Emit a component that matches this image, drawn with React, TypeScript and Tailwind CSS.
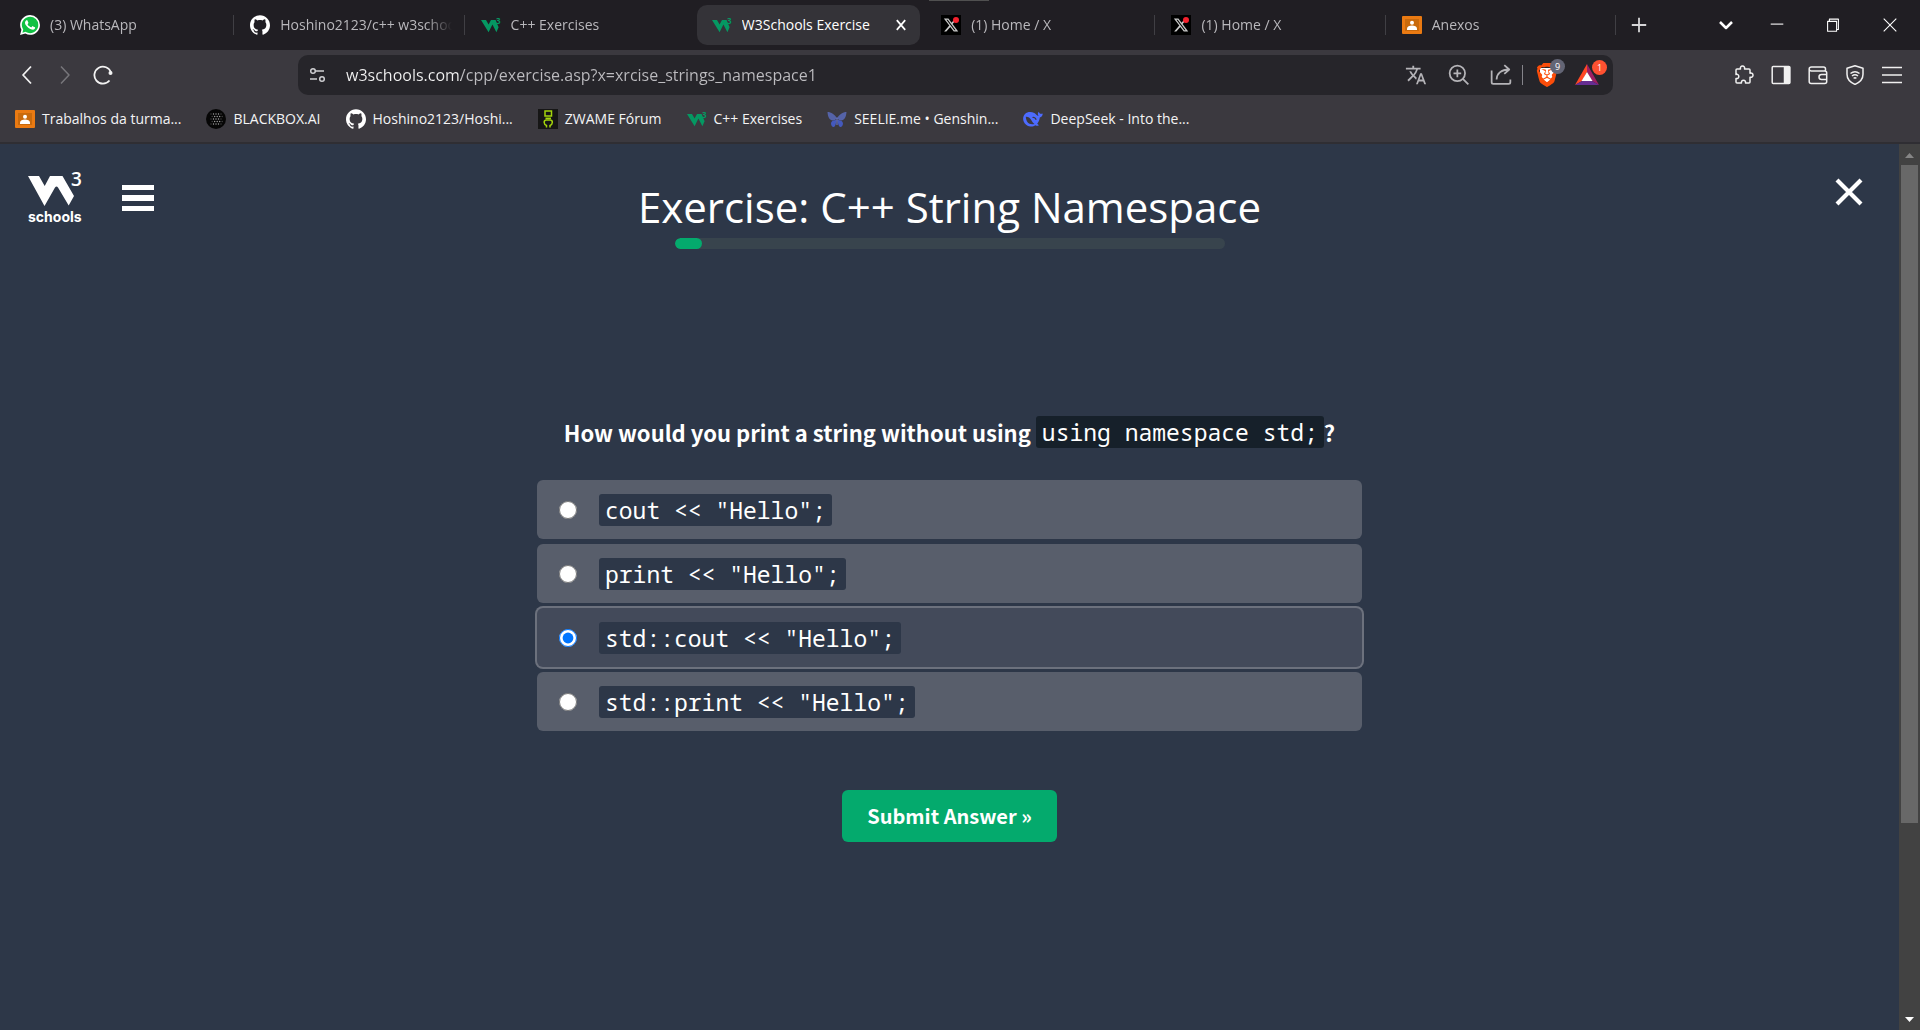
import { useState, type ReactNode } from "react";
import { SiBrave, SiGithub, SiWhatsapp } from "react-icons/si";
import { FaXTwitter } from "react-icons/fa6";
import { MdTranslate } from "react-icons/md";

function W3Mini() {
  return (
    <svg viewBox="0 0 20 20" className="size-5 shrink-0" aria-hidden="true">
      <path d="M0 5h5l2.6 4.6L10 5h4.600l3 7.200-2.200 5-4-7.600-3.800 7.600z" fill="#059862" />
      <text x="15" y="9" fontSize="8" fontWeight="700" fill="#059862" fontFamily="Open Sans">3</text>
    </svg>
  );
}

function WhatsappIcon() {
  return (
    <svg viewBox="0 0 24 24" className="size-5 shrink-0" aria-hidden="true">
      <circle cx="12" cy="12" r="11" fill="#10c143" />
      <path d="M1.500 22.500l1.200-6 4.500 4.600z" fill="#10c143" />
      <SiWhatsapp size={24} color="#fff" />
    </svg>
  );
}

function XIcon() {
  return (
    <span className="relative grid size-5 shrink-0 place-items-center bg-black">
      <FaXTwitter size={16} color="#c9c9c9" />
      <span className="absolute right-0.5 top-0.5 size-1.5 rounded-full bg-[#f4212e]" />
    </span>
  );
}

function ClassroomIcon() {
  return (
    <svg viewBox="0 0 20 18" className="h-[18px] w-5 shrink-0" aria-hidden="true">
      <rect width="20" height="18" rx="1" fill="#ea7a12" />
      <rect x="3" y="3" width="14" height="12" fill="#c96a0c" />
      <circle cx="10" cy="6.800" r="2" fill="#fff" />
      <path d="M5 14v-1.500c0-2 2.500-3 5-3s5 1 5 3V14z" fill="#fff" />
    </svg>
  );
}

function BlackboxIcon() {
  const rows = [5, 7.5, 10, 12.5, 15];
  return (
    <svg viewBox="0 0 20 20" className="size-5 shrink-0" aria-hidden="true">
      <circle cx="10" cy="10" r="10" fill="#060606" />
      {rows.map((y, i) =>
        [-2, -1, 0, 1, 2].map((k) => (
          <circle key={`${y}${k}`} cx={10 + k * 2.5 + (i % 2 ? 1.2 : 0)} cy={y} r="0.7" fill="#a5a5a5" opacity={Math.abs(k) === 2 ? 0.4 : 1} />
        )),
      )}
    </svg>
  );
}

function ZwameIcon() {
  return (
    <svg viewBox="0 0 20 20" className="size-5 shrink-0" aria-hidden="true">
      <rect width="20" height="20" fill="#161616" />
      <g fill="none" stroke="#a4d50c" strokeWidth="1.500">
        <rect x="7" y="2" width="6.500" height="5" />
        <path d="M7.500 9.300h5.500" />
        <path d="M8.500 18.500v-2C5.500 15.500 5.500 11.500 8 11h4.500c2.500.5 2.500 4.500-.5 5.500v2" />
      </g>
    </svg>
  );
}

function ButterflyIcon() {
  return (
    <svg viewBox="0 0 20 20" className="size-5 shrink-0" aria-hidden="true">
      <path d="M10 9.500C8 5.500 4 3 .5 3c.3 3 .8 6.500 3.500 8 1.500.8 4 .5 6-1.500zM10 9.500c2-4 6-6.500 9.500-6.500-.3 3-.8 6.500-3.500 8-1.500.8-4 .5-6-1.500z" fill="#5563a8" />
      <path d="M9.500 11c-2.500 0-5.500 1-5.500 3.500 0 2 1.500 4 3 3.500C8.500 17.300 9.200 14 9.500 11zM10.500 11c2.500 0 5.500 1 5.500 3.500 0 2-1.500 4-3 3.500-1.500-.7-2.200-4-2.500-7z" fill="#4459bd" />
      <path d="M9.500 8.500h1V16h-1z" fill="#6e7fd6" />
    </svg>
  );
}

function DeepSeekIcon() {
  return (
    <svg viewBox="0 0 20 20" className="size-5 shrink-0" aria-hidden="true">
      <path
        d="M19.800 4.500c-.8.500-1.700.3-2.600.2-.7-.4-1-1.200-1.400-2-.9.700-1.200 1.900-.8 3 .2.600.5 1 .3 1.400-1.300-.5-2.500-1.900-4-3C8.500 2.600 4.500 2.500 2 5 .1 7-.3 9.700.6 12.200c1 2.800 3.500 5 6.600 5.300 1.900.2 3.700-.1 5.200-1.200.8.500 1.800.6 2.800.5.700-.2.300-.9-.1-1.200l-.9-.9c1.900-1.900 2.300-4.200 2.600-6.100 1.700-.5 2.800-2 3-4.100z"
        fill="#4d6bfe"
      />
      <path d="M2.800 7.800c2.800-.2 4.500 1.600 5.700 3.600.9 1.500 1.600 2.700 3 3.600-2.800.6-5.600.2-7.300-2.200C3.300 11.300 2.900 9.500 2.800 7.800z" fill="#3b393f" />
      <path d="M9.500 8.500c1.300-.5 3.200.4 3.600 2.300" fill="none" stroke="#3b393f" strokeWidth="1.200" />
    </svg>
  );
}

function Line({ d, size = 20, width = 1.5, color = "#d6d6d8", children }: { d?: string; size?: number; width?: number; color?: string; children?: ReactNode }) {
  return (
    <svg width={size} height={size} viewBox="0 0 20 20" fill="none" stroke={color} strokeWidth={width} strokeLinejoin="round" className="shrink-0" aria-hidden="true">
      {d && <path d={d} />}
      {children}
    </svg>
  );
}

const tabs = [
  { title: "(3) WhatsApp", icon: <WhatsappIcon /> },
  { title: "Hoshino2123/c++ w3schools", icon: <SiGithub size={20} color="#fff" className="shrink-0" /> },
  { title: "C++ Exercises", icon: <W3Mini /> },
  { title: "W3Schools Exercise", icon: <W3Mini />, active: true },
  { title: "(1) Home / X", icon: <XIcon /> },
  { title: "(1) Home / X", icon: <XIcon /> },
  { title: "Anexos", icon: <ClassroomIcon /> },
];

const bookmarks = [
  { title: "Trabalhos da turma...", icon: <ClassroomIcon /> },
  { title: "BLACKBOX.AI", icon: <BlackboxIcon /> },
  { title: "Hoshino2123/Hoshi...", icon: <SiGithub size={20} color="#fff" className="shrink-0" /> },
  { title: "ZWAME Fórum", icon: <ZwameIcon /> },
  { title: "C++ Exercises", icon: <W3Mini /> },
  { title: "SEELIE.me • Genshin...", icon: <ButterflyIcon /> },
  { title: "DeepSeek - Into the...", icon: <DeepSeekIcon /> },
];

const answers = ['cout << "Hello";', 'print << "Hello";', 'std::cout << "Hello";', 'std::print << "Hello";'];

function TabStrip() {
  return (
    <div className="relative flex h-[50px] items-center bg-[#201e23] pl-1">
      <div className="absolute left-[929px] top-0 h-px w-[60px] bg-[#505050]" />
      <div className="grid h-full min-w-0 flex-1 grid-cols-7">
        {tabs.map((t, i) => (
          <div key={i} className="flex h-full min-w-0 items-center">
            <div className={t.active ? "ml-0.5 mr-1 flex h-10 min-w-0 flex-1 items-center rounded-[10px] bg-[#343338] pl-[15px] pr-2" : "flex h-10 min-w-0 flex-1 items-center pl-4 pr-3"}>
              <button type="button" className="flex min-w-0 flex-1 items-center gap-2.5 text-left">
                {t.icon}
                <span
                  className={
                    t.active
                      ? "flex-1 overflow-hidden whitespace-nowrap text-white"
                      : "flex-1 overflow-hidden whitespace-nowrap text-[#b9b8bc] [mask-image:linear-gradient(90deg,#000_85%,transparent)]"
                  }
                >
                  {t.title}
                </span>
              </button>
              {t.active && (
                <button type="button" aria-label="Close tab" className="p-1">
                  <Line size={14} width={2.500} color="#fff" d="M4 3l12 14M16 3L4 17" />
                </button>
              )}
            </div>
            <div className={i === 2 || i === 3 ? "w-px" : "h-5 w-px bg-[#403f44]"} />
          </div>
        ))}
      </div>
      <div className="flex w-[304px] shrink-0 items-center pl-[11px]">
        <button type="button" aria-label="New tab" className="grid size-6 place-items-center"><Line size={18} width={2} d="M10 2v16M2 10h16" /></button>
        <button type="button" aria-label="Search tabs" className="ml-[63px] grid size-6 place-items-center"><Line size={20} width={2.500} color="#fff" d="M4 7l6 6 6-6" /></button>
        <button type="button" aria-label="Minimize" className="ml-[27px] grid size-6 place-items-center"><Line size={18} width={1.200} color="#fff" d="M3 9h14" /></button>
        <button type="button" aria-label="Restore" className="ml-8 grid size-6 place-items-center"><Line size={18} width={1.200} color="#fff" d="M4 6h10v11H4zM6 6V3.500h10V15h-2" /></button>
        <button type="button" aria-label="Close" className="ml-[33px] grid size-6 place-items-center"><Line size={18} width={1.200} color="#fff" d="M3 3l14 14M17 3L3 17" /></button>
      </div>
    </div>
  );
}

function Toolbar() {
  return (
    <div className="flex h-12 items-start justify-between pt-[5px]">
      <div className="flex h-10 w-[298px] shrink-0 items-center gap-[18px] pl-[17px]">
        <button type="button" aria-label="Back"><Line width={1.800} color="#f2f2f2" d="M14 1.500L6 10l8 8.500" /></button>
        <button type="button" aria-label="Forward"><Line width={1.500} color="#77767b" d="M6 1.500l8 8.500-8 8.500" /></button>
        <button type="button" aria-label="Reload">
          <Line width={1.800} color="#f2f2f2" d="M16.500 15.500A8.500 8.500 0 1 1 18 7.500"><circle cx="17.500" cy="8" r="2" fill="#f2f2f2" stroke="none" /></Line>
        </button>
      </div>
      <div className="flex h-10 min-w-0 flex-1 items-center rounded-[10px] bg-[#26252a] pl-2.5">
        <button type="button" aria-label="Site information">
          <Line color="#cfcfd2"><circle cx="5" cy="6" r="2.300" /><path d="M8 6h8M2 14h7" /><circle cx="14" cy="14" r="2.300" /></Line>
        </button>
        <input
          type="text"
          aria-label="Address"
          defaultValue="w3schools.com/cpp/exercise.asp?x=xrcise_strings_namespace1"
          className="ml-[18px] h-8 min-w-0 flex-1 bg-[linear-gradient(90deg,#f2f2f2_115px,#bdbcc0_115px)] bg-clip-text text-base text-transparent outline-none"
        />
        <div className="flex h-10 items-center">
          <button type="button" aria-label="Translate"><MdTranslate size={22} color="#b5b4b8" /></button>
          <button type="button" aria-label="Zoom" className="ml-[21px]"><Line size={22} width={1.600} color="#b5b4b8" d="M13.500 13.500l5 5M8.500 5v7M5 8.500h7"><circle cx="8.500" cy="8.500" r="7" /></Line></button>
          <button type="button" aria-label="Share" className="ml-5"><Line size={22} width={1.600} color="#b5b4b8" d="M1.500 6v10.500c0 1 .5 1.500 1.500 1.500h14c1 0 1.500-.5 1.500-1.500V14M6 14c0-5 4-9 11.500-9M13 1l4.500 4-4.500 4" /></button>
          <span className="ml-2.5 h-5 w-px bg-[#85848a]" />
          <button type="button" aria-label="Brave Shields" className="relative ml-3">
            <svg width="24" height="24" viewBox="0 0 24 24" aria-hidden="true"><path d="M5 5h14v9l-7 7-7-7z" fill="#fff" /><SiBrave size={24} color="#fb4d0a" /></svg>
            <span className="absolute -right-1.5 -top-1 grid size-[15px] place-items-center rounded-full bg-[#636575] text-[9px] leading-none text-white">9</span>
          </button>
          <button type="button" aria-label="Brave Rewards" className="relative ml-4 mr-3.5">
            <svg width="24" height="22" viewBox="0 0 24 22" aria-hidden="true">
              <path d="M12 0L0 21l7-4 5-9z" fill="#ff4724" />
              <path d="M12 0l12 21-7-4-5-9z" fill="#9e1f63" />
              <path d="M0 21h24l-7-4H7z" fill="#662d91" />
              <path d="M12 8l5.500 9h-11z" fill="#fff" />
            </svg>
            <span className="absolute -right-2 -top-1 grid size-[15px] place-items-center rounded-full bg-[#ff5131] text-[9px] leading-none text-white">1</span>
          </button>
        </div>
      </div>
      <div className="flex h-10 w-[307px] shrink-0 items-center justify-end gap-[17px] pr-[18px]">
        <button type="button" aria-label="Extensions"><Line d="M3 4h3.500c-.6-1.800.5-3 2-3s2.600 1.200 2 3H15c.7 0 1 .3 1 1v3.200c1.800-.5 3 .5 3 2s-1.200 2.500-3 2V17c0 .7-.3 1-1 1h-3.500c.4-1.800-.6-2.800-2-2.800s-2.400 1-2 2.800H3c-.7 0-1-.3-1-1v-3.500c1.800.4 2.800-.6 2.800-2S3.800 9 2 9.500V5c0-.7.300-1 1-1z" color="#f0f0f0" /></button>
        <button type="button" aria-label="Sidebar"><Line color="#f0f0f0"><rect x="1.200" y="1.500" width="17.600" height="17" rx="1" /><path d="M13.500 2h5v16h-5z" fill="#f0f0f0" /></Line></button>
        <button type="button" aria-label="Wallet"><Line color="#f0f0f0" d="M17.500 6V4c0-1.200-.6-2-2-2H3.500C2 2 1.200 2.800 1.200 4v12.500c0 1.200.8 2 2 2h13.500c1.200 0 2-.8 2-2V8c0-1.200-.8-2-2-2H3.500C2 6 1.200 5.200 1.200 4M18.500 9.500h-5c-1.700 0-2.500 1-2.500 2.500s.8 2.500 2.500 2.500h5" /></button>
        <button type="button" aria-label="VPN"><Line size={20} color="#f0f0f0" d="M10 .8l8 2.500v6c0 4.700-2.700 7.900-8 10.100-5.300-2.200-8-5.400-8-10.100v-6zM5.500 8.500c2.800-2.300 6.200-2.300 9 0M7 11c1.800-1.500 4.200-1.500 6 0M8.600 13.300c.9-.6 1.900-.6 2.800 0" /></button>
        <button type="button" aria-label="Menu"><Line width={1.600} color="#f0f0f0" d="M0 2.500h20M0 10h20M0 17.500h20" /></button>
      </div>
    </div>
  );
}

function Bookmarks() {
  return (
    <nav aria-label="Bookmarks" className="flex h-[46px] items-center gap-[25px] border-b-2 border-[#2f2e33] pb-0.5 pl-[15px]">
      {bookmarks.map((b) => (
        <a key={b.title} href="#" className="flex items-center gap-[7px] whitespace-nowrap text-[#f4f4f5]">
          {b.icon}
          <span>{b.title}</span>
        </a>
      ))}
    </nav>
  );
}

function PageHeader() {
  return (
    <header className="flex items-start px-7 pt-6">
      <div className="flex w-60 items-start gap-9">
        <a href="#" aria-label="W3Schools" className="block">
          <svg width="58" height="60" viewBox="0 0 58 60" fill="#fff" aria-hidden="true">
            <path d="M0 8h11l5.700 10L22 8h12.500L46 28l-5.300 9.500L30 19.500q-1.500-2-3 0L16.500 38z" />
            <text x="43" y="18" fontSize="19" fontWeight="600" fontFamily="Open Sans">3</text>
            <text x="0" y="54" fontSize="14" fontWeight="700" fontFamily="Inter">schools</text>
          </svg>
        </a>
        <button type="button" aria-label="Open menu" className="mt-[17px] flex flex-col gap-[5px]">
          <span className="h-[5px] w-8 bg-white" />
          <span className="h-[6px] w-8 bg-white" />
          <span className="h-[5px] w-8 bg-white" />
        </button>
      </div>
      <div className="flex flex-1 flex-col items-center">
        <h1 className="mt-2 text-[42px] leading-[62px]">Exercise: C++ String Namespace</h1>
        <div role="progressbar" aria-label="Progress" aria-valuenow={5} aria-valuemin={0} aria-valuemax={100} className="h-[11px] w-full max-w-[550px] overflow-hidden rounded-full bg-[#38444d]">
          <div className="h-full w-[5%] rounded-full bg-[#04aa6d]" />
        </div>
      </div>
      <div className="flex w-60 justify-end pr-[7px]">
        <button type="button" aria-label="Close exercise" className="mt-[9px]">
          <Line size={30} width={2.800} color="#fff" d="M2 2l16 16M18 2L2 18" />
        </button>
      </div>
    </header>
  );
}

function Quiz() {
  const [selected, setSelected] = useState(2);
  return (
    <form className="mx-auto mt-[167px] flex w-full max-w-[825px] flex-col items-center" onSubmit={(e) => e.preventDefault()}>
      <p id="question" className="flex items-center font-['Noto_Sans_CJK_SC',sans-serif] text-[22px] font-semibold leading-8">
        <span>How would you print a string without using</span>
        <code className="ml-[5px] rounded-[3px] bg-[#16202a] px-[6px] font-['Noto_Sans_Mono','DejaVu_Sans_Mono',monospace] text-[23px] font-normal leading-8">using namespace std;</code>
        <span>?</span>
      </p>
      <div role="radiogroup" aria-labelledby="question" className="mt-8 flex w-full flex-col gap-[5px]">
        {answers.map((a, i) => (
          <label
            key={a}
            className={
              i === selected
                ? "flex h-[59px] items-center gap-[22px] rounded-md bg-[#434a5a] pl-[22px] ring-2 ring-[#6c717d]"
                : "flex h-[59px] items-center gap-[22px] rounded-md bg-[#585e6b] pl-[22px]"
            }
          >
            <input type="radio" name="answer" checked={i === selected} onChange={() => setSelected(i)} className="size-[18px] accent-[#0075ff]" />
            <code className="rounded-[3px] bg-[#2d3748] px-[6px] font-['Noto_Sans_Mono','DejaVu_Sans_Mono',monospace] text-[23px] leading-8">{a}</code>
          </label>
        ))}
      </div>
      <button type="submit" className="mt-[59px] h-[52px] rounded-md bg-[#04aa6d] px-[25px] font-['Noto_Sans_CJK_SC',sans-serif] text-xl font-semibold">
        Submit Answer »
      </button>
    </form>
  );
}

function Scrollbar() {
  return (
    <div aria-hidden="true" className="flex w-[21px] shrink-0 flex-col bg-[#424242]">
      <svg viewBox="0 0 21 21" className="h-[21px]"><path d="M6 14l4.500-5 4.500 5z" fill="#868686" /></svg>
      <div className="flex-1 px-0.5"><div className="h-[78%] bg-[#686868]" /></div>
      <svg viewBox="0 0 21 21" className="h-[21px]"><path d="M6 8l4.500 5L15 8z" fill="#fff" /></svg>
    </div>
  );
}

export default function App() {
  return (
    <div className="flex h-screen flex-col overflow-hidden bg-[#3b393f] font-['Open_Sans','Noto_Sans',sans-serif] text-sm text-white">
      <TabStrip />
      <Toolbar />
      <Bookmarks />
      <div className="flex min-h-0 flex-1">
        <main className="min-w-0 flex-1 bg-[#2d3748]">
          <PageHeader />
          <Quiz />
        </main>
        <Scrollbar />
      </div>
    </div>
  );
}
